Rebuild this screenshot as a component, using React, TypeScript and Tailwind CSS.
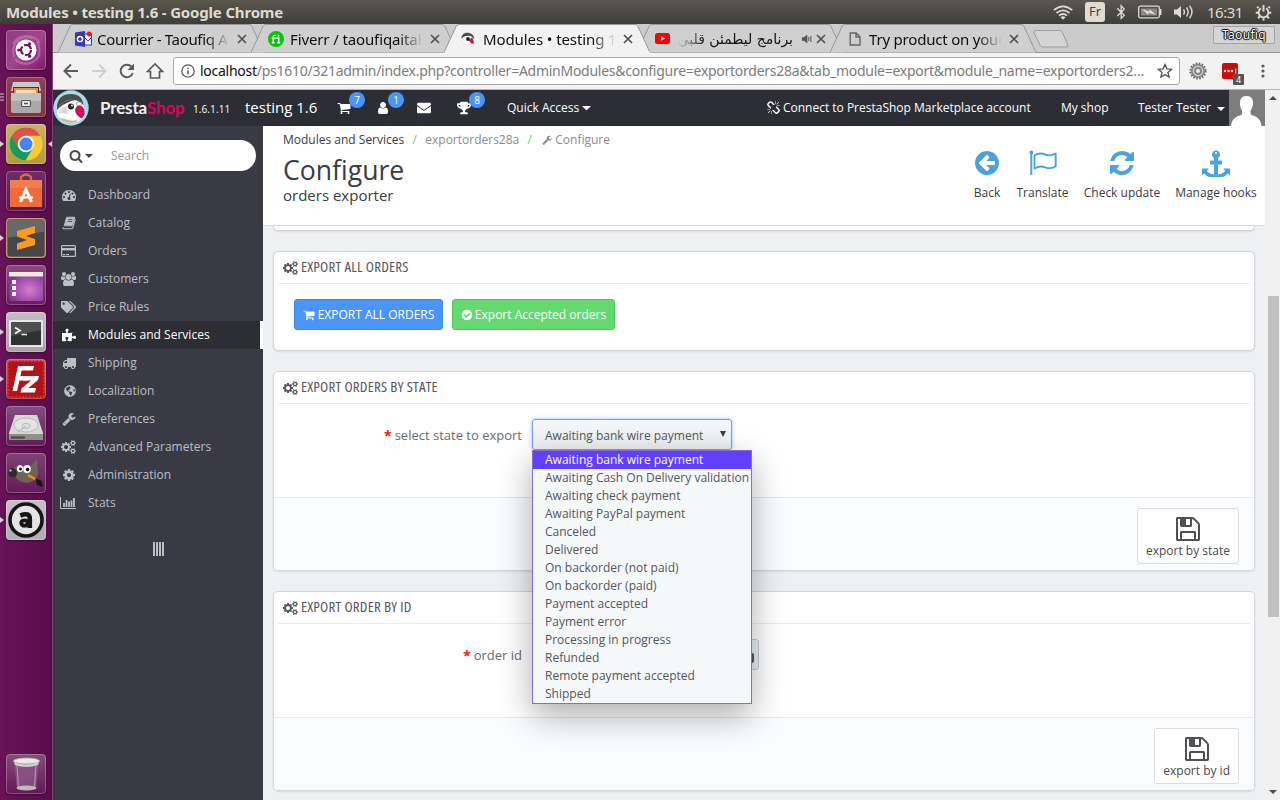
import React from "react";
import { FaTags, FaPuzzlePiece, FaGlobeAmericas, FaTrophy, FaEnvelope, FaBluetoothB } from "react-icons/fa";

type IconProps = { className?: string };

const P = {
  cart: "M704 1536q0 52-38 90t-90 38-90-38-38-90 38-90 90-38 90 38 38 90zm896 0q0 52-38 90t-90 38-90-38-38-90 38-90 90-38 90 38 38 90zm128-1088v512q0 24-16.5 42.5t-40.5 21.5l-1044 122q13 60 13 70 0 16-24 64h920q26 0 45 19t19 45-19 45-45 19h-1024q-26 0-45-19t-19-45q0-11 8-31.5t16-36 21.5-40 15.5-29.5l-177-823h-204q-26 0-45-19t-19-45 19-45 45-19h256q16 0 28.5 6.5t19.5 15.5 13 24.5 8 26 5.5 29.5 4.5 26h1201q26 0 45 19t19 45z",
  check:
    "M1412 734q0-28-18-46l-91-90q-19-19-45-19t-45 19l-408 407-226-226q-19-19-45-19t-45 19l-91 90q-18 18-18 46 0 27 18 45l362 362q19 19 45 19 27 0 46-19l543-543q18-18 18-45zm252 162q0 209-103 385.5t-279.5 279.5-385.5 103-385.5-103-279.5-279.5-103-385.5 103-385.5 279.5-279.5 385.5-103 385.5 103 279.5 279.5 103 385.5z",
  floppy:
    "M512 1536h768v-384h-768v384zm896 0h128v-896q0-14-10-38.5t-20-34.5l-281-281q-10-10-34-20t-39-10v416q0 40-28 68t-68 28h-576q-40 0-68-28t-28-68v-416h-128v1280h128v-416q0-40 28-68t68-28h832q40 0 68 28t28 68v416zm-384-928v-320q0-13-9.5-22.5t-22.5-9.5h-192q-13 0-22.5 9.5t-9.5 22.5v320q0 13 9.5 22.5t22.5 9.5h192q13 0 22.5-9.5t9.5-22.5zm640 32v928q0 40-28 68t-68 28h-1344q-40 0-68-28t-28-68v-1344q0-40 28-68t68-28h928q40 0 88 20t76 48l280 280q28 28 48 76t20 88z",
  cog: "M1152 896q0-106-75-181t-181-75-181 75-75 181 75 181 181 75 181-75 75-181zm512-109v222q0 12-8 23t-20 13l-185 28q-19 54-39 91 35 50 107 138 10 12 10 25t-9 23q-27 37-99 108t-94 71q-12 0-26-9l-138-108q-44 23-91 38-16 136-29 186-7 28-36 28h-222q-14 0-24.5-8.5t-11.5-21.5l-28-184q-49-16-90-37l-141 107q-10 9-25 9-14 0-25-11-126-114-165-168-7-10-7-23 0-12 8-23 15-21 51-66.5t54-70.5q-27-50-41-99l-183-27q-13-2-21-12.5t-8-23.5v-222q0-12 8-23t19-13l186-28q14-46 39-92-40-57-107-138-10-12-10-24 0-10 9-23 26-36 98.5-107.5t94.5-71.5q13 0 26 10l138 107q44-23 91-38 16-136 29-186 7-28 36-28h222q14 0 24.5 8.5t11.5 21.5l28 184q49 16 90 37l142-107q9-9 24-9 13 0 25 10 129 119 165 170 7 8 7 22 0 12-8 23-15 21-51 66.5t-54 70.5q26 50 41 98l183 28q13 2 21 12.5t8 23.5z",
  cogs: "M896 896q0-106-75-181t-181-75-181 75-75 181 75 181 181 75 181-75 75-181zm768 512q0-52-38-90t-90-38-90 38-38 90q0 53 37.5 90.5t90.5 37.5 90.5-37.5 37.5-90.5zm0-1024q0-52-38-90t-90-38-90 38-38 90q0 53 37.5 90.5t90.5 37.5 90.5-37.5 37.5-90.5zm-384 421v185q0 10-7 19.5t-16 10.5l-155 24q-11 35-32 76 34 48 90 115 7 11 7 20 0 12-7 19-23 30-82.5 89.5t-78.5 59.5q-11 0-21-7l-115-90q-37 19-77 31-11 108-23 155-7 24-30 24h-186q-11 0-20-7.5t-10-17.5l-23-153q-34-10-75-31l-118 89q-7 7-20 7-11 0-21-8-144-133-144-160 0-9 7-19 10-14 41-53t47-61q-23-44-35-82l-152-24q-10-1-17-9.5t-7-19.5v-185q0-10 7-19.5t16-10.5l155-24q11-35 32-76-34-48-90-115-7-11-7-20 0-12 7-20 22-30 82-89t79-59q11 0 21 7l115 90q34-18 77-32 11-108 23-154 7-24 30-24h186q11 0 20 7.5t10 17.5l23 153q34 10 75 31l118-89q8-7 20-7 11 0 21 8 144 133 144 160 0 8-7 19-12 16-42 54t-45 60q23 48 34 82l152 23q10 2 17 10.5t7 19.5zm640 533v140q0 16-149 31-12 27-30 52 51 113 51 138 0 4-4 7-122 71-124 71-8 0-46-47t-52-68q-20 2-30 2t-30-2q-14 21-52 68t-46 47q-2 0-124-71-4-3-4-7 0-25 51-138-18-25-30-52-149-15-149-31v-140q0-16 149-31 13-29 30-52-51-113-51-138 0-4 4-7 4-2 35-20t59-34 30-16q8 0 46 46.5t52 67.5q20-2 30-2t30 2q51-71 92-112l6-2q4 0 124 70 4 3 4 7 0 25-51 138 17 23 30 52 149 15 149 31zm0-1024v140q0 16-149 31-12 27-30 52 51 113 51 138 0 4-4 7-122 71-124 71-8 0-46-47t-52-68q-20 2-30 2t-30-2q-14 21-52 68t-46 47q-2 0-124-71-4-3-4-7 0-25 51-138-18-25-30-52-149-15-149-31v-140q0-16 149-31 13-29 30-52-51-113-51-138 0-4 4-7 4-2 35-20t59-34 30-16q8 0 46 46.5t52 67.5q20-2 30-2t30 2q51-71 92-112l6-2q4 0 124 70 4 3 4 7 0 25-51 138 17 23 30 52 149 15 149 31z",
  refresh:
    "M1639 1056q0 5-1 7-64 268-268 434.5t-478 166.5q-146 0-282.5-55t-243.5-157l-129 129q-19 19-45 19t-45-19-19-45v-448q0-26 19-45t45-19h448q26 0 45 19t19 45-19 45l-137 137q71 66 161 102t187 36q134 0 250-65t186-179q11-17 53-117 8-23 30-23h192q13 0 22.5 9.5t9.5 22.5zm25-800v448q0 26-19 45t-45 19h-448q-26 0-45-19t-19-45 19-45l138-138q-148-137-349-137-134 0-250 65t-186 179q-11 17-53 117-8 23-30 23h-199q-13 0-22.5-9.5t-9.5-22.5v-7q65-268 270-434.5t480-166.5q146 0 284 55.5t245 156.5l130-129q19-19 45-19t45 19 19 45z",
  back: "M1408 960v-128q0-26-19-45t-45-19h-502l189-189q19-19 19-45t-19-45l-91-91q-18-18-45-18t-45 18l-362 362-91 91q-18 18-18 45t18 45l91 91 362 362q18 18 45 18t45-18l91-91q18-18 18-45t-18-45l-189-189h502q26 0 45-19t19-45zm256-64q0 209-103 385.5t-279.5 279.5-385.5 103-385.5-103-279.5-279.5-103-385.5 103-385.5 279.5-279.5 385.5-103 385.5 103 279.5 279.5 103 385.5z",
  wrench:
    "M448 1472q0-26-19-45t-45-19-45 19-19 45 19 45 45 19 45-19 19-45zm644-420l-682 682q-37 37-90 37-52 0-91-37l-106-108q-38-36-38-90 0-53 38-91l681-681q39 98 114.5 173.5t173.5 114.5zm634-435q0 39-23 106-47 134-164.5 217.5t-258.5 83.5q-185 0-316.5-131.5t-131.5-316.5 131.5-316.5 316.5-131.5q58 0 121.5 16.5t107.5 46.5q16 11 16 28t-16 28l-293 169v224l193 107q5-3 79-48.5t135.5-81 70.5-35.5q15 0 23.5 10t8.5 25z",
  search:
    "M1216 832q0-185-131.5-316.5t-316.5-131.5-316.5 131.5-131.5 316.5 131.5 316.5 316.5 131.5 316.5-131.5 131.5-316.5zm512 832q0 52-38 90t-90 38q-54 0-90-38l-343-342q-179 124-399 124-143 0-273.5-55.5t-225-150-150-225-55.5-273.5 55.5-273.5 150-225 225-150 273.5-55.5 273.5 55.5 225 150 150 225 55.5 273.5q0 220-124 399l343 343q37 37 37 90z",
  user: "M1536 1399q0 109-62.5 187t-150.5 78h-854q-88 0-150.5-78t-62.5-187q0-85 8.5-160.5t31.5-152 58.5-131 94-89 134.5-34.5q131 128 313 128t313-128q76 0 134.5 34.5t94 89 58.5 131 31.5 152 8.5 160.5zm-256-887q0 159-112.5 271.5t-271.5 112.5-271.5-112.5-112.5-271.5 112.5-271.5 271.5-112.5 271.5 112.5 112.5 271.5z",
  truck:
    "M640 1408q0-52-38-90t-90-38-90 38-38 90 38 90 90 38 90-38 38-90zm-384-512h384v-256h-158q-13 0-22 9l-195 195q-9 9-9 22v30zm1280 512q0-52-38-90t-90-38-90 38-38 90 38 90 90 38 90-38 38-90zm256-1088v1024q0 15-4 26.5t-13.5 18.5-16.5 11.5-23.5 6-22.5 2-25.5 0-22.5-.5q0 106-75 181t-181 75-181-75-75-181h-384q0 106-75 181t-181 75-181-75-75-181h-64q-3 0-22.5.5t-25.5 0-22.5-2-23.5-6-16.5-11.5-13.5-18.5-4-26.5q0-26 19-45t45-19v-320q0-8-.5-35t0-38 2.5-34.5 6.5-37 14-30.5 22.5-30l198-198q19-19 50.5-32t58.5-13h160v-192q0-26 19-45t45-19h1024q26 0 45 19t19 45z",
  unlink:
    "M439 1271l-256 256q-11 9-23 9t-23-9q-9-10-9-23t9-23l256-256q10-9 23-9t23 9q9 10 9 23t-9 23zm169 41v320q0 14-9 23t-23 9-23-9-9-23v-320q0-14 9-23t23-9 23 9 9 23zm-224-224q0 14-9 23t-23 9h-320q-14 0-23-9t-9-23 9-23 23-9h320q14 0 23 9t9 23zm1264 128q0 120-85 203l-147 146q-83 83-203 83-121 0-204-85l-334-335q-21-21-42-56l239-18 273 274q28 28 68 27.5t68-27.5l147-146q28-28 28-67 0-40-28-68l-274-275 18-239q35 21 56 42l336 336q84 86 84 204zm-617-724l-239 18-273-274q-28-28-68-28-39 0-68 27l-147 146q-28 28-28 67 0 40 28 68l274 274-18 240q-35-21-56-42l-336-336q-84-86-84-204 0-120 85-203l147-146q83-83 203-83 121 0 204 85l334 335q21 21 42 56zm633 84q0 14-9 23t-23 9h-320q-14 0-23-9t-9-23 9-23 23-9h320q14 0 23 9t9 23zm-544-544v320q0 14-9 23t-23 9-23-9-9-23v-320q0-14 9-23t23-9 23 9 9 23zm407 151l-256 256q-11 9-23 9t-23-9q-9-10-9-23t9-23l256-256q10-9 23-9t23 9q9 10 9 23t-9 23z",
  users:
    "M593 896q-162 5-265 128h-134q-82 0-138-40.5t-56-118.5q0-353 124-353 6 0 43.5 21t97.5 42.5 119 21.5q67 0 133-23-5 37-5 66 0 159 90 287zm1071 637q0 120-73 189.5t-194 69.5h-874q-121 0-194-69.5t-73-189.5q0-53 3.5-103.5t14-109 26.5-108.5 43-97.5 62-81 85.5-53.5 111.5-20q10 0 43 21.5t73 48 107 48 135 21.5 135-21.5 107-48 73-48 43-21.5q61 0 111.5 20t85.5 53.5 62 81 43 97.5 26.5 108.5 14 109 3.5 103.5zm-1024-1277q0 106-75 181t-181 75-181-75-75-181 75-181 181-75 181 75 75 181zm704 384q0 159-112.5 271.5t-271.5 112.5-271.5-112.5-112.5-271.5 112.5-271.5 271.5-112.5 271.5 112.5 112.5 271.5zm576 225q0 78-56 118.5t-138 40.5h-134q-103-123-265-128 90-128 90-287 0-29-5-66 66 23 133 23 59 0 119-21.5t97.5-42.5 43.5-21q124 0 124 353zm-128-609q0 106-75 181t-181 75-181-75-75-181 75-181 181-75 181 75 75 181z",
  gauge:
    "M384 1152q0-53-37.5-90.5t-90.5-37.5-90.5 37.5-37.5 90.5 37.5 90.5 90.5 37.5 90.5-37.5 37.5-90.5zm192-448q0-53-37.5-90.5t-90.5-37.5-90.5 37.5-37.5 90.5 37.5 90.5 90.5 37.5 90.5-37.5 37.5-90.5zm428 481l101-382q6-26-7.5-48.5t-38.5-29.5-48 6.5-30 39.5l-101 382q-60 5-107 43.5t-63 98.5q-20 77 20 146t117 89 146-20 89-117q16-60-6-117t-72-91zm660-33q0-53-37.5-90.5t-90.5-37.5-90.5 37.5-37.5 90.5 37.5 90.5 90.5 37.5 90.5-37.5 37.5-90.5zm-640-640q0-53-37.5-90.5t-90.5-37.5-90.5 37.5-37.5 90.5 37.5 90.5 90.5 37.5 90.5-37.5 37.5-90.5zm448 192q0-53-37.5-90.5t-90.5-37.5-90.5 37.5-37.5 90.5 37.5 90.5 90.5 37.5 90.5-37.5 37.5-90.5zm320 448q0 261-141 483-19 29-54 29h-1402q-35 0-54-29-141-221-141-483 0-182 71-348t191-286 286-191 348-71 348 71 286 191 191 286 71 348z",
  anchor:
    "M960 256q0-26-19-45t-45-19-45 19-19 45 19 45 45 19 45-19 19-45zm832 1024v352q0 22-20 30-8 2-12 2-12 0-23-9l-93-93q-119 143-318.5 226.5t-429.5 83.5-429.5-83.5-318.5-226.5l-93 93q-9 9-23 9-4 0-12-2-20-8-20-30v-352q0-14 9-23t23-9h352q22 0 30 20 8 19-7 35l-100 100q67 91 189.5 153.5t271.5 82.5v-647h-192q-26 0-45-19t-19-45v-128q0-26 19-45t45-19h192v-163q-58-34-93-92.5t-35-128.5q0-106 75-181t181-75 181 75 75 181q0 70-35 128.5t-93 92.5v163h192q26 0 45 19t19 45v128q0 26-19 45t-45 19h-192v647q149-20 271.5-82.5t189.5-153.5l-100-100q-15-16-7-35 8-20 30-20h352q14 0 23 9t9 23z",
};

const Glyph = ({ d, w = 1792, className }: { d: string; w?: number; className?: string }) => (
  <svg viewBox={`0 0 ${w} 1792`} className={className} fill="currentColor">
    <path d={d} />
  </svg>
);

const Cogs = ({ className }: IconProps) => <Glyph d={P.cogs} w={1920} className={className} />;

const BookIcon = ({ className }: IconProps) => (
  <svg viewBox="0 0 14 14" className={className} fill="none" stroke="currentColor">
    <path d="M4.6 1.2h8.2l-2.5 8.6H2.2z" fill="currentColor" strokeWidth="0.8" strokeLinejoin="round" />
    <path d="M13.3 3.2l-2.5 8.6q-.3.9-1.2.9H2.2q-1.3 0-1.2-1.6" strokeWidth="1.1" />
    <path d="M6 3.6h4.6M5.4 5.5H10" stroke="#3a3a45" strokeWidth="0.8" />
  </svg>
);

const CardIcon = ({ className }: IconProps) => (
  <svg viewBox="0 0 15 12" className={className} fill="none" stroke="currentColor">
    <rect x="0.6" y="0.6" width="13.8" height="10.8" rx="1" strokeWidth="1.2" />
    <path d="M0.5 4.2h14" strokeWidth="2.4" />
    <path d="M2 9.5h2M5 9.5h3" strokeWidth="1" />
  </svg>
);

const StatsIcon = ({ className }: IconProps) => (
  <svg viewBox="0 0 16 12" className={className} fill="none" stroke="currentColor">
    <path d="M.5 0v11.5H16" strokeWidth="1" />
    <path d="M4 10V6M6.5 10V3M9 10V4.500M11.500 10V3.500M14 10V1" strokeWidth="1.800" />
  </svg>
);

const FlagIcon = ({ className }: IconProps) => (
  <svg viewBox="0 0 28 26" className={className} fill="none" stroke="currentColor">
    <circle cx="2.300" cy="2.500" r="1.900" fill="currentColor" stroke="none" />
    <path d="M2.300 3v22" strokeWidth="2" />
    <path
      d="M5.500 5.200C10 2.600 13 3 16.500 4.600s6 1.100 10.200-1.100v12.800c-4.500 2.400-7 2.700-10.200 1.200s-6.500-1.500-11 1z"
      strokeWidth="1.900"
      strokeLinejoin="round"
    />
  </svg>
);

/* ---------------- System bar ---------------- */

const SystemBar = () => (
  <div className="flex h-6 shrink-0 items-center justify-between bg-linear-to-b from-[#5a574d] to-[#3e3d38] pr-2 pl-1.5 font-['Noto_Sans',sans-serif] text-[#dfdbd2]">
    <span className="text-[15px] leading-6 font-bold tracking-[-0.17px]">Modules • testing 1.6 - Google Chrome</span>
    <div className="flex items-center">
      <svg viewBox="0 0 20 15" className="mr-3 h-[15px] w-5" fill="none" stroke="currentColor" strokeWidth="1.700">
        <path d="M.8 5.200Q10-2.400 19.200 5.200M3.500 8Q10 2.600 16.500 8M6 10.700Q10 7.300 14 10.700" />
        <path d="M7.500 12.200 10 14.800l2.500-2.600Q10 10.500 7.500 12.200z" fill="currentColor" stroke="none" />
      </svg>
      <span className="mr-2.5 flex h-5 w-5 items-center justify-center rounded-[3px] bg-[#dfdbd2] text-[13px] text-[#45433d]">Fr</span>
      <FaBluetoothB className="mr-[11px] h-4 w-3" />
      <svg viewBox="0 0 24 14" className="mr-3 h-3.5 w-6" fill="none" stroke="currentColor">
        <rect x="0.700" y="1.200" width="20.600" height="11.600" rx="1.500" strokeWidth="1.300" />
        <rect x="3" y="3.500" width="16" height="7" fill="#8d8a82" stroke="none" />
        <path d="M22.700 4v6" strokeWidth="1.500" />
        <path d="M4 4l7 2.500 1-2 6 5.500-7-2.300-1 2z" fill="currentColor" stroke="none" />
      </svg>
      <svg viewBox="0 0 20 14" className="mr-[13px] h-3.5 w-5" fill="none" stroke="currentColor" strokeWidth="1.400">
        <path d="M0 4.500h3L7 1v12L3 9.500H0z" fill="currentColor" stroke="none" />
        <path d="M9.500 4.500q1.800 2.500 0 5M12.500 2.500q3.300 4.500 0 9M15.500.8q5 6.200 0 12.400" />
      </svg>
      <span className="mr-3 w-[36px] text-[15px] leading-6 tracking-[-0.5px] whitespace-nowrap">16:31</span>
      <svg viewBox="0 0 18 18" className="h-[17px] w-[17px]" fill="none" stroke="currentColor">
        <path d="M6.300 4.500a5.200 5.200 0 1 0 5.400 0" strokeWidth="2" />
        <path d="M9 1v7" strokeWidth="2" />
        <path d="M3.800 4.300 2.300 2.800M14.200 4.300l1.500-1.500M3.500 9.300H.8M14.500 9.300h2.700M5 13.300l-1.700 1.800M13 13.300l1.700 1.800M9 15v2.600" strokeWidth="2.200" />
      </svg>
    </div>
  </div>
);

/* ---------------- Launcher ---------------- */

const launcher: { bg: string; left?: boolean; right?: boolean; stripes?: boolean; art: React.ReactNode }[] = [
  {
    bg: "bg-linear-to-br from-[#8e3b80] via-[#a2458f] to-[#86126e]",
    art: (
      <>
        <path d="M8 27C4 14 14 5 26 8M31 12c6 10 1 21-11 22M7 14C12 4 27 3 34 13M34 24c-4 10-18 13-25 5" stroke="#c58abb" strokeWidth="2" opacity=".55" fill="none" />
        <circle cx="20" cy="20" r="10.500" fill="#fff" />
        <circle cx="20" cy="20" r="5" fill="none" stroke="#6a1258" strokeWidth="2.200" strokeDasharray="8.700 1.800" />
        <circle cx="12.800" cy="20" r="1.600" fill="#6a1258" />
        <circle cx="23.600" cy="13.800" r="1.600" fill="#6a1258" />
        <circle cx="23.600" cy="26.200" r="1.600" fill="#6a1258" />
      </>
    ),
  },
  {
    bg: "bg-linear-to-b from-[#8a4058] to-[#8b303c]",
    stripes: true,
    art: (
      <>
        <path d="M7 5h26l2 9H5z" fill="#c9c9c9" />
        <rect x="7" y="10" width="26" height="8" fill="#433" />
        <path d="M8 11h24v5H8z" fill="#f08a45" />
        <path d="M10 13h20v4H10z" fill="#f7ddc0" />
        <path d="M5 16h30v18q0 2-2 2H7q-2 0-2-2z" fill="#a9a9a9" />
        <path d="M5 16h30v8H5z" fill="#c1c1c1" />
        <rect x="15.500" y="23.500" width="9" height="6" rx="1" fill="#e9e9e9" stroke="#555" strokeWidth="1.200" />
        <path d="M18 26.500h4" stroke="#555" strokeWidth="1.500" />
      </>
    ),
  },
  {
    bg: "bg-linear-to-b from-[#c7b16e] to-[#b29c3c]",
    left: true,
    right: true,
    art: (
      <>
        <circle cx="20" cy="20" r="16.500" fill="#fbc934" />
        <path d="M12.900 24.100 5.700 11.700A16.500 16.500 0 0 0 19.500 36.500L27.100 24.100A8.200 8.200 0 0 1 12.900 24.100z" fill="#1b9b58" />
        <path d="M12.900 24.100 5.700 11.700A16.500 16.500 0 0 1 34.400 11.800H20a8.200 8.200 0 0 0-7.100 12.300z" fill="#d9534a" />
        <circle cx="20" cy="20" r="8.200" fill="#f4f4f4" />
        <circle cx="20" cy="20" r="6.500" fill="#4385f0" />
      </>
    ),
  },
  {
    bg: "bg-linear-to-b from-[#6c2f66] to-[#601355]",
    art: (
      <>
        <path d="M15 12V6q5-5 10 0v6" fill="none" stroke="#e56b3a" strokeWidth="2.300" />
        <path d="M4 9h32v27H4z" fill="#ef6c38" />
        <path d="M4 9h32v8H4z" fill="#f47d4d" />
        <path d="M14.500 31 20 18.500 25.500 31" fill="none" stroke="#fff" strokeWidth="3" />
        <path d="M13 26.500h14" stroke="#fff" strokeWidth="2" />
      </>
    ),
  },
  {
    bg: "bg-[#b47b3d]",
    left: true,
    art: (
      <>
        <rect x="1.500" y="1.500" width="37" height="37" rx="3" fill="#474747" />
        <path d="M1.500 1.500h37v12L1.500 20z" fill="#686868" />
        <path d="M29 8v7l-9 3 9 3v6L11 32v-6.500l10-3.500-10-3.500V13z" fill="#ff9820" />
      </>
    ),
  },
  {
    bg: "bg-linear-to-b from-[#8c4b82] to-[#6b1a5f]",
    art: (
      <>
        <defs>
          <radialGradient id="desk" cx=".6" cy=".6" r=".7">
            <stop offset="0" stopColor="#d77bd0" />
            <stop offset="1" stopColor="#7c2f95" />
          </radialGradient>
        </defs>
        <rect x="3" y="8" width="34" height="28" rx="1" fill="url(#desk)" />
        <rect x="3" y="7" width="34" height="4.500" fill="#eee9d8" />
        <path d="M6 15h4v4H6zM6 21h4v4H6zM6 27h4v4H6z" fill="#fff" />
      </>
    ),
  },
  {
    bg: "bg-linear-to-b from-[#c5bcc5] to-[#a9a1aa]",
    left: true,
    art: (
      <>
        <rect x="3" y="8" width="34" height="27" rx="1" fill="#e8e8e8" />
        <rect x="5" y="10" width="30" height="23" fill="#2f3230" />
        <path d="M5 10h30v8L5 24z" fill="#4d504e" />
        <path d="M9 15.500l5 3-5 3M15.500 22.500h5.500" fill="none" stroke="#f2f2f2" strokeWidth="1.700" />
      </>
    ),
  },
  {
    bg: "bg-linear-to-b from-[#c24950] to-[#b31218]",
    left: true,
    art: (
      <>
        <rect x="2" y="2" width="36" height="36" rx="2" fill="#b51217" stroke="#df6b6b" strokeWidth=".8" strokeDasharray="2 1.500" />
        <path d="M12 7h16l-1 4.500H15.500L14.500 17h8l-1 4.500h-8L11 32H6.500z" fill="#fff" />
        <path d="M18 17h15l-1 4-9.500 8H30l-1 4.500H14.500l1-4 9.500-8h-8z" fill="#fff" />
      </>
    ),
  },
  {
    bg: "bg-linear-to-b from-[#854e80] to-[#651959]",
    art: (
      <>
        <path d="M9 9h22l6 18v5q0 2-2 2H5q-2 0-2-2v-5z" fill="#d7d7d7" />
        <path d="M3 28h34v4q0 2-2 2H5q-2 0-2-2z" fill="#8f908c" />
        <ellipse cx="20" cy="19" rx="12" ry="7" fill="#e3e3e3" stroke="#b9b9b9" />
        <ellipse cx="20" cy="20" rx="4" ry="2.500" fill="none" stroke="#b5b5b5" />
        <path d="M20 20l-8 6" stroke="#bcbcbc" strokeWidth="1.500" />
        <path d="M5 31.500h14" stroke="#444" strokeWidth="1.800" />
      </>
    ),
  },
  {
    bg: "bg-linear-to-b from-[#7c4277] to-[#641a59]",
    art: (
      <>
        <path d="M8 14l6 1 4-2 7 0 6-7 1 15c-3 11-16 11-22 4z" fill="#6d6657" />
        <path d="M2.500 17q3-4 6.500-1t1 7q-5 3-7.500-1z" fill="#2b2b2c" />
        <circle cx="4.500" cy="17.500" r="1.200" fill="#bbb" />
        <ellipse cx="14" cy="15.500" rx="3" ry="3.500" fill="#fff" />
        <ellipse cx="21" cy="16" rx="3.800" ry="4" fill="#fff" />
        <circle cx="14.500" cy="16" r="1.500" fill="#111" />
        <circle cx="21.500" cy="16.500" r="1.800" fill="#111" />
        <path d="M22 22l9 5" stroke="#ef8f2a" strokeWidth="2.500" />
        <path d="M29 25l7 3 1 6-6-2z" fill="#171717" />
      </>
    ),
  },
  {
    bg: "bg-linear-to-b from-[#c8bfc9] to-[#b5abb7]",
    left: true,
    art: (
      <>
        <circle cx="20" cy="20" r="16" fill="#e4e4e4" stroke="#151515" strokeWidth="3.600" />
        <ellipse cx="18.500" cy="23" rx="3.300" ry="2.700" fill="none" stroke="#151515" strokeWidth="3.800" />
        <path d="M14.300 15.500q9.500-3.500 9.500 3v9.500" fill="none" stroke="#151515" strokeWidth="4.600" />
      </>
    ),
  },
];

const Tile = ({ bg, children }: { bg: string; children: React.ReactNode }) => (
  <div className={"relative h-10 w-10 overflow-hidden rounded-[4px] shadow-[0_1px_2px_rgba(0,0,0,0.4)] " + bg}>
    <svg viewBox="0 0 40 40" className="h-10 w-10">
      {children}
    </svg>
    <span className="absolute inset-0 rounded-[4px] border border-white/25" />
  </div>
);

const Launcher = () => (
  <aside className="flex w-[53px] shrink-0 flex-col justify-between border-r border-[#7d4071] bg-linear-to-r from-[#671357] to-[#590d4a] pt-1.5 pb-1.5">
    <div className="flex flex-col gap-[7px]">
      {launcher.map((l, i) => (
        <div key={i} className="flex h-10 items-center">
          <span className="w-1.5 shrink-0 text-[#d8cbd5]">
            {l.left && (
              <svg viewBox="0 0 4 6" className="h-1.5 w-1" fill="currentColor">
                <path d="M0 0l4 3-4 3z" />
              </svg>
            )}
            {l.stripes && (
              <svg viewBox="0 0 4 8" className="h-2 w-1" stroke="currentColor">
                <path d="M0 1h4M0 4h4M0 7h4" />
              </svg>
            )}
          </span>
          <Tile bg={l.bg}>{l.art}</Tile>
          {l.right && (
            <svg viewBox="0 0 4 6" className="ml-0.5 h-1.5 w-1 text-[#d8cbd5]" fill="currentColor">
              <path d="M4 0L0 3l4 3z" />
            </svg>
          )}
        </div>
      ))}
    </div>
    <div className="pl-1.5">
      <Tile bg="bg-linear-to-b from-[#854b7d] to-[#651558]">
        <path d="M8 7h25l-3 28H11z" fill="#8f5a8a" opacity=".75" />
        <path d="M11 10l1.500 23M30 10l-1.500 23" stroke="#b48fb0" strokeWidth="1.200" />
        <ellipse cx="20.500" cy="7" rx="13" ry="3" fill="#e8ece6" stroke="#aeb1ac" />
        <path d="M8 8q12 5 25 0l-1 3q-12 4-23 0z" fill="#cfd3cd" />
        <ellipse cx="20.500" cy="34" rx="10" ry="2.500" fill="#b9bdb8" />
      </Tile>
    </div>
  </aside>
);

/* ---------------- Browser chrome ---------------- */

const Bird = ({ className }: IconProps) => (
  <svg viewBox="0 0 36 36" className={className}>
    <defs>
      <clipPath id="bird">
        <circle cx="18" cy="18" r="15" />
      </clipPath>
    </defs>
    <circle cx="18" cy="18" r="17.700" fill="#a9d9ee" />
    <g clipPath="url(#bird)">
      <path d="M4 36V17Q6 5 17 5t13 9l1 4-3 18z" fill="#fff" />
      <path d="M4 20Q3 4 18 4q11 0 12.500 11l-5-3.500Q22 9 16 12 8 15 4 20z" fill="#4a4f4c" />
      <path d="M5 17q7-8 15-8-8 1-15 8z" fill="#8c918d" />
      <path d="M5 23q5-7 10-7-3 5 1 8z" fill="#d9dada" />
      <circle cx="18" cy="16.500" r="3" fill="#24282a" />
      <circle cx="19" cy="15.500" r=".9" fill="#fff" />
      <path d="M23 13q3-2.500 6 0l-2 4q-3 0-4-4z" fill="#f7f7f7" stroke="#777" strokeWidth=".6" />
      <path d="M22 20q1-5 5-4.500 4 1 4.500 6t-1.500 7q-3 0-5.500-3T22 20z" fill="#d70a5c" />
      <path d="M6 28q5 0 9 2 6 2 10-1l-5 7H10z" fill="#c9b893" />
    </g>
  </svg>
);

const CloseX = () => (
  <svg viewBox="0 0 10 10" className="h-2.5 w-2.5 shrink-0 text-[#505050]" stroke="currentColor" strokeWidth="1.700">
    <path d="M1 1l8 8M9 1L1 9" />
  </svg>
);

const Tab = ({ active, icon, children }: { active?: boolean; icon: React.ReactNode; children: React.ReactNode }) => (
  <div className={"relative mr-[-14px] h-[29px] w-[207px] shrink-0 " + (active ? "z-10" : "")}>
    <svg viewBox="0 0 207 29" className="absolute inset-0 h-[29px] w-[207px]">
      <path d="M0 28.500 12 2.500Q13 .5 15 .5H191q2 0 3 2L206 28.500" fill={active ? "#f2f2f2" : "#cfcfcf"} stroke="#969696" />
      {active && <path d="M.5 28.500h206" stroke="#f2f2f2" strokeWidth="1.500" />}
    </svg>
    <div className="relative flex h-[29px] items-center pl-[17px]">
      <span className="flex w-[22px] shrink-0 items-center">{icon}</span>
      {children}
      <CloseX />
    </div>
  </div>
);

const tabText =
  "w-[140px] shrink-0 overflow-hidden text-[15px] leading-5 whitespace-nowrap [mask-image:linear-gradient(to_right,black_78%,transparent_95%)]";

const TabStrip = () => (
  <div className="flex h-[29px] shrink-0 items-start bg-[#cbcbcb] pl-[5px] font-['Noto_Sans',sans-serif] text-[#101010] shadow-[inset_0_-1px_0_#969696]">
    <Tab
      icon={
        <svg viewBox="0 0 17 16" className="h-4 w-[17px]">
          <rect x="8" y="3" width="8.500" height="11" fill="#fff" stroke="#3a34c4" />
          <path d="M0 1.500 10 0v16L0 14.500z" fill="#3a34c4" />
          <circle cx="5" cy="8" r="2.600" fill="none" stroke="#fff" strokeWidth="1.500" />
          <path d="M10 7l3 3 3-3" stroke="#3a34c4" fill="none" />
          <circle cx="14" cy="3" r="2.400" fill="#f01717" />
        </svg>
      }
    >
      <span className={tabText + " tracking-[-0.33px]"}>Courrier - Taoufiq A</span>
    </Tab>
    <Tab
      icon={
        <svg viewBox="0 0 16 16" className="h-4 w-4">
          <circle cx="8" cy="8" r="8" fill="#00c900" />
          <path d="M5.200 12V6q0-2 2.500-1.600M3.700 7.300h7v4.700M3.700 11.800h3M9.200 11.800h3" stroke="#fff" strokeWidth="1.400" fill="none" />
          <circle cx="10.500" cy="4.700" r="1" fill="#fff" />
        </svg>
      }
    >
      <span className={tabText + " tracking-[-0.12px]"}>Fiverr / taoufiqaital</span>
    </Tab>
    <Tab
      active
      icon={
        <svg viewBox="0 0 16 16" className="h-3.5 w-3.5">
          <path d="M1 8Q1 1 8 1t7 7q-2 7-7 7-7-1-7-7z" fill="#fff" stroke="#ddd" />
          <path d="M0 7Q2 0 9 1q6 1 6 7l-3-3Q7 3 0 7z" fill="#4c4c4c" />
          <circle cx="8" cy="8" r="2.200" fill="#222" />
          <path d="M9 9l4-3 2 7q-4 1-6-4z" fill="#d60b52" />
        </svg>
      }
    >
      <span className={tabText + " tracking-[-0.1px]"}>Modules • testing 1.</span>
    </Tab>
    <Tab
      icon={
        <svg viewBox="0 0 15 11" className="ml-px h-[11px] w-[15px]">
          <rect width="15" height="11" rx="2.500" fill="#ff0000" />
          <path d="M6 3.200v4.600l4-2.300z" fill="#fff" />
        </svg>
      }
    >
      <span
        dir="rtl"
        className="w-[117px] shrink-0 overflow-hidden font-['DejaVu_Sans','Noto_Sans',sans-serif] text-[14px] leading-5 whitespace-nowrap [mask-image:linear-gradient(to_left,black_74%,transparent_99%)]"
      >
        برنامج ليطمئن قلبي
      </span>
      <svg viewBox="0 0 10 10" className="mr-1 ml-[9px] h-2.5 w-2.5 shrink-0 text-[#555]" fill="currentColor">
        <path d="M0 3.200h2L5.300.5v9L2 6.800H0z" />
        <path d="M6.800 3v4M8.900 2v6" stroke="currentColor" />
      </svg>
    </Tab>
    <Tab
      icon={
        <svg viewBox="0 0 12 14" className="ml-0.5 h-3.5 w-3" fill="none" stroke="#666" strokeWidth="1.400">
          <path d="M1.200 1h6L11 4.700V13H1.200zM7 1v4h4" />
        </svg>
      }
    >
      <span className={tabText + " tracking-[-0.2px]"}>Try product on your</span>
    </Tab>
    <svg viewBox="0 0 36 18" className="mt-1.5 ml-2.5 h-[18px] w-9" fill="#d4d4d4" stroke="#9b9b9b">
      <path d="M3 .500h24q1.500 0 2.300 1.500l5.500 13q.7 2-1.300 2H9.500q-1.500 0-2.300-1.500L1 2.500Q.300.500 3 .500z" />
    </svg>
    <span className="mt-0.5 mr-[5px] ml-auto flex h-[18px] w-[62px] items-center justify-center rounded-[2px] border border-[#a3a3a3] bg-[#d6d6d6] text-[12px] tracking-[0.3px] text-white [text-shadow:0_0_1px_#000,1px_0_1px_#000,-1px_0_1px_#000,0_1px_1px_#000,0_-1px_1px_#000]">
      Taoufiq
    </span>
  </div>
);

const Toolbar = () => (
  <div className="flex h-[37px] shrink-0 items-center border-b border-[#b5b5b5] bg-[#f2f2f2] pl-2.5 text-[#5a5a5a]">
    <svg viewBox="0 0 16 16" className="h-4 w-4" fill="none" stroke="currentColor" strokeWidth="2">
      <path d="M15 8H2M8 1.500 1.500 8 8 14.500" />
    </svg>
    <svg viewBox="0 0 16 16" className="ml-3 h-4 w-4 text-[#cfcfcf]" fill="none" stroke="currentColor" strokeWidth="2">
      <path d="M1 8h13M8 1.500 14.500 8 8 14.500" />
    </svg>
    <svg viewBox="0 0 16 16" className="ml-3 h-4 w-4" fill="none" stroke="currentColor" strokeWidth="2">
      <path d="M13.800 10.200A6.300 6.300 0 1 1 12.500 3.600" />
      <path d="M15 .5V7H8.500z" fill="currentColor" stroke="none" />
    </svg>
    <svg viewBox="0 0 18 18" className="ml-[11px] h-[18px] w-[18px]" fill="none" stroke="currentColor" strokeWidth="1.700">
      <path d="M1.500 9.500 9 2l7.500 7.500h-3V16h-9V9.500z" />
    </svg>
    <div className="ml-[9px] flex h-7 w-[1007px] shrink-0 items-center rounded-[3px] border border-[#a9a9a9] bg-white pr-1.5 pl-[7px]">
      <svg viewBox="0 0 14 14" className="h-3.5 w-3.5 shrink-0" fill="none" stroke="currentColor" strokeWidth="1.300">
        <circle cx="7" cy="7" r="6.200" />
        <path d="M7 6.200v4M7 3.500v1.500" strokeWidth="1.500" />
      </svg>
      <span className="ml-[5px] w-[952px] font-['Noto_Sans',sans-serif] text-[14px] leading-6 tracking-[-0.265px] whitespace-nowrap text-[#7c7c7c]">
        <span className="text-[#111]">localhost</span>
        /ps1610/321admin/index.php?controller=AdminModules&amp;configure=exportorders28a&amp;tab_module=export&amp;module_name=exportorders2…
      </span>
      <svg viewBox="0 0 16 16" className="ml-auto h-4 w-4 shrink-0" fill="none" stroke="currentColor" strokeWidth="1.400">
        <path d="M8 1.500l1.900 4.400 4.700.4-3.600 3.100 1.100 4.700L8 11.600l-4.100 2.500L5 9.400 1.400 6.300l4.700-.4z" />
      </svg>
    </div>
    <svg viewBox="0 0 18 18" className="ml-[9px] h-[18px] w-[18px] shrink-0">
      <circle cx="9" cy="9" r="7" fill="#858585" />
      <circle cx="9" cy="9" r="7.600" fill="none" stroke="#666" strokeWidth="2" strokeDasharray="1.600 1.430" />
      <circle cx="9" cy="9" r="4.700" fill="none" stroke="#c9c9c9" strokeWidth="1.500" />
      <circle cx="9" cy="9" r="2" fill="#efefef" />
    </svg>
    <div className="relative ml-[15px] h-4 w-4 shrink-0 rounded-[2px] bg-[#cf0a0a]">
      <svg viewBox="0 0 16 16" className="h-4 w-4" fill="#fff">
        <circle cx="3" cy="8" r="1.200" />
        <circle cx="6.500" cy="8" r="1.200" />
        <circle cx="10" cy="8" r="1.200" />
        <path d="M13.300 5.500h1v5h-1z" />
      </svg>
      <span className="absolute top-[11px] left-[11px] flex h-[11px] w-[11px] items-center justify-center rounded-[1px] bg-[#555] font-['Noto_Sans',sans-serif] text-[9px] leading-none text-white">
        4
      </span>
    </div>
    <svg viewBox="0 0 4 14" className="ml-[23px] h-3.5 w-1 shrink-0" fill="currentColor">
      <circle cx="2" cy="2" r="1.600" />
      <circle cx="2" cy="7" r="1.600" />
      <circle cx="2" cy="12" r="1.600" />
    </svg>
  </div>
);

/* ---------------- PrestaShop back office ---------------- */

const CountIcon = ({ n, children, className }: { n?: number; children: React.ReactNode; className: string }) => (
  <span className={"relative shrink-0 " + className}>
    {children}
    {n !== undefined && (
      <span className="absolute -top-[9px] left-3 flex h-4 w-4 items-center justify-center rounded-full bg-[#4a95f7] text-[10px] leading-none">
        {n}
      </span>
    )}
  </span>
);

const TopNav = () => (
  <header className="flex h-9 shrink-0 items-center bg-[#2d2e35] text-[12px] leading-none whitespace-nowrap text-white">
    <Bird className="h-9 w-9 shrink-0" />
    <span className="mb-0.5 ml-[11px] w-[93px] font-['Lato',sans-serif] text-[17px] font-bold tracking-[-0.15px] text-[#efefef]">
      Presta<span className="text-[#d20a5e]">Shop</span>
    </span>
    <span className="mt-0.5 w-[52px] text-[10px] tracking-[0.1px]">1.6.1.11</span>
    <span className="mb-px w-[92px] text-[15px]">testing 1.6</span>
    <CountIcon n={7} className="w-[39px]">
      <Glyph d={P.cart} className="h-3.5 w-3.5" />
    </CountIcon>
    <CountIcon n={1} className="w-[41px]">
      <Glyph d={P.user} className="h-3.5 w-3.5" />
    </CountIcon>
    <CountIcon className="w-[40px]">
      <FaEnvelope className="h-3.5 w-3.5" />
    </CountIcon>
    <CountIcon n={8} className="w-[50px]">
      <FaTrophy className="h-3.5 w-3.5" />
    </CountIcon>
    <span className="text-[12px]">Quick Access</span>
    <svg viewBox="0 0 8 4" className="ml-[3px] h-[4.500px] w-[9px]" fill="currentColor">
      <path d="M0 0h8L4 4z" />
    </svg>
    <div className="ml-auto flex items-center">
      <Glyph d={P.unlink} className="mr-0.5 h-3.5 w-3.5" />
      <span className="w-[278px]">Connect to PrestaShop Marketplace account</span>
      <span className="w-[77px]">My shop</span>
      <span>Tester Tester</span>
      <svg viewBox="0 0 8 4" className="mt-0.5 mr-1 ml-1.5 h-1 w-2" fill="currentColor">
        <path d="M0 0h8L4 4z" />
      </svg>
      <svg viewBox="0 0 36 36" className="h-9 w-9">
        <path d="M0 0h36v36H0z" fill="#7d7d7d" />
        <path d="M11 15q-1-9 6.500-9T24 15q-1 4-2.500 5.500 0 4 1 4.500c6 2 9 4 10 11H2c1-7 4-9 10-11q1.500-.5 1-4.500-1.500-1.500-2-5.500z" fill="#fff" />
      </svg>
    </div>
  </header>
);

const nav: { label: string; icon: React.ReactNode; active?: boolean }[] = [
  { label: "Dashboard", icon: <Glyph d={P.gauge} className="h-3.5 w-3.5" /> },
  { label: "Catalog", icon: <BookIcon className="h-3.5 w-3.5" /> },
  { label: "Orders", icon: <CardIcon className="h-3 w-[15px]" /> },
  { label: "Customers", icon: <Glyph d={P.users} w={1920} className="h-3.5 w-[15px]" /> },
  { label: "Price Rules", icon: <FaTags className="h-3.5 w-[15px]" /> },
  { label: "Modules and Services", icon: <FaPuzzlePiece className="h-3.5 w-3.5" />, active: true },
  { label: "Shipping", icon: <Glyph d={P.truck} className="h-3.5 w-3.5" /> },
  { label: "Localization", icon: <FaGlobeAmericas className="h-3 w-3" /> },
  { label: "Preferences", icon: <Glyph d={P.wrench} className="h-3.5 w-3.5" /> },
  { label: "Advanced Parameters", icon: <Cogs className="h-3.5 w-[15px]" /> },
  { label: "Administration", icon: <Glyph d={P.cog} className="h-3.5 w-3.5" /> },
  { label: "Stats", icon: <StatsIcon className="h-3 w-4" /> },
];

const Sidebar = () => (
  <nav className="w-[210px] shrink-0 bg-[#3a3a45] pt-3.5 text-[12px] text-[#bebfc3]">
    <div className="mx-[7px] flex h-[31px] items-center rounded-full bg-white pl-[9px] text-[#4a4a4a]">
      <Glyph d={P.search} className="h-3.5 w-3.5" />
      <svg viewBox="0 0 8 4" className="ml-0.5 h-1 w-2" fill="currentColor">
        <path d="M0 0h8L4 4z" />
      </svg>
      <span className="ml-[18px] text-[#999]">Search</span>
    </div>
    <ul className="mt-2.5">
      {nav.map((n) => (
        <li
          key={n.label}
          className={
            "flex h-7 items-center tracking-[0.02px] " +
            (n.active ? "border-r-[3px] border-white bg-[#2d2e33] text-white" : "")
          }
        >
          <span className="mr-[12px] flex w-[23px] shrink-0 justify-end">{n.icon}</span>
          <span>{n.label}</span>
        </li>
      ))}
    </ul>
    <div className="mt-[25px] flex justify-center gap-px">
      {[0, 1, 2, 3].map((i) => (
        <span key={i} className="h-3.5 w-0.5 bg-[#bcbfbf]" />
      ))}
    </div>
  </nav>
);

const Action = ({ icon, label, w }: { icon: React.ReactNode; label: string; w: string }) => (
  <div className={"flex flex-col items-center text-center " + w}>
    <span className="flex h-[30px] items-center text-[#4ba3d9]">{icon}</span>
    <span className="mt-1.5 leading-[18px] whitespace-nowrap">{label}</span>
  </div>
);

const PageHead = () => (
  <div className="flex h-[100px] shrink-0 justify-between border-b border-[#d5d7da] bg-white pl-5 text-[12px] text-[#3b3b45]">
    <div className="pt-[5px]">
      <div className="flex items-center leading-[18px]">
        <span>Modules and Services</span>
        <span className="w-[21px] text-center text-[#72c279]">/</span>
        <span className="text-[#8b8b8f]">exportorders28a</span>
        <span className="w-[21px] text-center text-[#72c279]">/</span>
        <Glyph d={P.wrench} className="mr-[3px] ml-0.5 h-2.5 w-2.5 text-[#8b8b8f]" />
        <span className="text-[#8b8b8f]">Configure</span>
      </div>
      <h1 className="mt-[5px] text-[26.600px] leading-8">Configure</h1>
      <div className="text-[15px] leading-[18px]">orders exporter</div>
    </div>
    <div className="flex gap-3.5 pt-[22px] pr-2">
      <Action w="mr-px w-7" label="Back" icon={<Glyph d={P.back} className="h-7 w-7" />} />
      <Action w="w-[53px]" label="Translate" icon={<FlagIcon className="h-[26px] w-7" />} />
      <Action w="w-[78px]" label="Check update" icon={<Glyph d={P.refresh} className="h-7 w-7" />} />
      <Action w="w-[82px]" label="Manage hooks" icon={<Glyph d={P.anchor} className="h-7 w-7" />} />
    </div>
  </div>
);

const Panel = ({
  title,
  height,
  children,
  action,
}: {
  title: string;
  height: string;
  children: React.ReactNode;
  action?: string;
}) => (
  <section
    className={
      "mx-2.5 mb-5 flex shrink-0 flex-col rounded-[5px] border border-[#d3d5d9] bg-white shadow-[0_1px_2px_rgba(0,0,0,0.08)] " +
      height
    }
  >
    <h3 className="mx-1 flex h-8 shrink-0 items-center border-b border-[#e9eaec] pl-[5px] text-[#55565c]">
      <Cogs className="mr-[3px] h-3.5 w-[15px]" />
      <span className="mb-0.5 text-[15px] tracking-[0.22px] whitespace-nowrap [font-stretch:75%]">{title}</span>
    </h3>
    <div className="flex-1">{children}</div>
    {action && (
      <div className="flex h-[73px] shrink-0 justify-end rounded-b-[4px] border-t border-[#e6e8ea] bg-[#fbfcfe] pt-2.5 pr-[15px] text-[#48494f]">
        <div className="flex h-14 flex-col items-center rounded-[3px] border border-[#dddddf] bg-white px-2 pt-1.5 text-[12px]">
          <Glyph d={P.floppy} className="h-7 w-7 text-[#515155]" />
          <span className="leading-4">{action}</span>
        </div>
      </div>
    )}
  </section>
);

const states = [
  "Awaiting bank wire payment",
  "Awaiting Cash On Delivery validation",
  "Awaiting check payment",
  "Awaiting PayPal payment",
  "Canceled",
  "Delivered",
  "On backorder (not paid)",
  "On backorder (paid)",
  "Payment accepted",
  "Payment error",
  "Processing in progress",
  "Refunded",
  "Remote payment accepted",
  "Shipped",
];

const FieldRow = ({ label, children }: { label: string; children: React.ReactNode }) => (
  <div className="flex items-center pt-[15px]">
    <span className="flex w-[248px] items-center justify-end pt-0.5 text-[13px] text-[#6a6b70]">
      <span className="mr-[3px] text-[14px] leading-none font-bold text-[#f01818]">*</span>
      {label}
    </span>
    <div className="ml-2.5">{children}</div>
  </div>
);

const StateSelect = () => (
  <div className="relative h-[31px] w-[200px]">
    <div className="flex h-[31px] items-center justify-between rounded-[3px] border border-[#7a9cf0] bg-linear-to-b from-[#f5f8f9] to-[#ebefef] pr-[5px] pl-3 text-[12px] text-[#55565b] shadow-[0_0_4px_rgba(102,145,240,0.6)]">
      <span className="pt-0.5">{states[0]}</span>
      <svg viewBox="0 0 7 7" className="mb-0.5 h-1.5 w-1.5" fill="#3c3c3c">
        <path d="M0 0h7L3.500 7z" />
      </svg>
    </div>
    <ul className="absolute top-[31px] left-0 z-20 w-[220px] border border-[#8a6ccf] bg-[#f5f8f9] text-[12px] leading-[18px] whitespace-nowrap text-[#55565b] shadow-[0_12px_32px_rgba(0,0,0,0.32)]">
      {states.map((s, i) => (
        <li key={s} className={"h-[18px] pl-3 " + (i === 0 ? "bg-[#613fff] text-white" : "")}>
          {s}
        </li>
      ))}
    </ul>
  </div>
);

const Scrollbar = () => (
  <div className="flex w-[15px] shrink-0 flex-col items-center bg-[#f1f1f1] text-[#4c4c4c]">
    <svg viewBox="0 0 8 4" className="mt-1.5 h-1 w-2" fill="currentColor">
      <path d="M0 4h8L4 0z" />
    </svg>
    <div className="mt-[196px] ml-0.5 h-[321px] w-[11px] bg-[#c1c1c1]" />
    <svg viewBox="0 0 8 4" className="mt-auto mb-1.5 h-1 w-2" fill="currentColor">
      <path d="M0 0h8L4 4z" />
    </svg>
  </div>
);

export default function App() {
  return (
    <div className="flex h-[800px] w-[1280px] flex-col overflow-hidden bg-[#eff0f2] font-['Open_Sans',sans-serif]">
      <SystemBar />
      <div className="flex min-h-0 flex-1">
        <Launcher />
        <div className="flex min-w-0 flex-1 flex-col">
          <TabStrip />
          <Toolbar />
          <div className="flex min-h-0 flex-1">
            <div className="flex min-w-0 flex-1 flex-col">
              <TopNav />
              <div className="flex min-h-0 flex-1">
                <Sidebar />
                <main className="flex min-w-0 flex-1 flex-col">
                  <PageHead />
                  <div className="mx-2.5 mb-5 h-[5px] shrink-0 rounded-b-[5px] border border-t-0 border-[#d3d5d9] bg-white shadow-[0_1px_2px_rgba(0,0,0,0.08)]" />
                  <Panel title="EXPORT ALL ORDERS" height="h-[100px]">
                    <div className="flex gap-[9px] pt-[15px] pl-5 text-[12px] text-white">
                      <span className="flex h-[31px] w-[149px] items-center justify-center rounded-[3px] border border-[#3f8fdc] bg-[#4a95fa]">
                        <Glyph d={P.cart} className="mr-[3px] h-3 w-3" />
                        EXPORT ALL ORDERS
                      </span>
                      <span className="flex h-[31px] w-[163px] items-center justify-center rounded-[3px] border border-[#4dc95c] bg-[#64d970]">
                        <Glyph d={P.check} className="mr-0.5 h-3 w-3" />
                        Export Accepted orders
                      </span>
                    </div>
                  </Panel>
                  <Panel title="EXPORT ORDERS BY STATE" height="relative z-10 h-[200px]" action="export by state">
                    <FieldRow label="select state to export">
                      <StateSelect />
                    </FieldRow>
                  </Panel>
                  <Panel title="EXPORT ORDER BY ID" height="h-[200px]" action="export by id">
                    <FieldRow label="order id">
                      <div className="flex h-[31px] w-[227px] items-center justify-end rounded-[3px] border border-[#c3cfd3] bg-[#edf1f2]">
                        <span className="mt-1.5 mr-1 h-2.5 w-1.5 rounded-r-[2px] border-r-2 border-[#55565b]" />
                      </div>
                    </FieldRow>
                  </Panel>
                </main>
              </div>
            </div>
            <Scrollbar />
          </div>
        </div>
      </div>
    </div>
  );
}
